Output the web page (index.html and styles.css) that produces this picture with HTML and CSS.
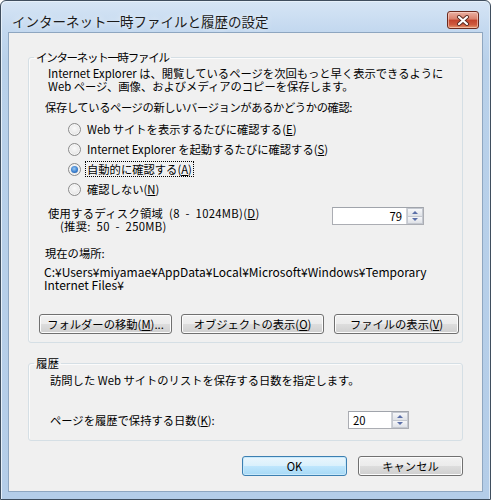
FILE: index.html
```html
<!DOCTYPE html>
<html lang="ja">
<head>
<meta charset="utf-8">
<title>インターネット一時ファイルと履歴の設定</title>
<link rel="stylesheet" href="styles.css">
</head>
<body>
<div class="window">
  <div class="titlebar">
    <span class="title">インターネット一時ファイルと履歴の設定</span>
    <span class="close">
      <svg width="14" height="11" viewBox="0 0 14 11">
        <path d="M3 2 L11 9 M11 2 L3 9" stroke="#5a2a20" stroke-width="4" stroke-linecap="round"/>
        <path d="M3 2 L11 9 M11 2 L3 9" stroke="#ffffff" stroke-width="2.2" stroke-linecap="round"/>
      </svg>
    </span>
  </div>
  <div class="client">
    <fieldset class="group g1">
      <legend>インターネット一時ファイル</legend>
      <p class="para">Internet Explorer は、閲覧しているページを次回もっと早く表示できるように<br>Web ページ、画像、およびメディアのコピーを保存します。</p>
      <p class="q">保存しているページの新しいバージョンがあるかどうかの確認:</p>
      <ul class="radios">
        <li><span class="radio"></span><span class="rl">Web サイトを表示するたびに確認する(<u>E</u>)</span></li>
        <li><span class="radio"></span><span class="rl">Internet Explorer を起動するたびに確認する(<u>S</u>)</span></li>
        <li><span class="radio on"></span><span class="rl focus">自動的に確認する(<u>A</u>)</span></li>
        <li><span class="radio"></span><span class="rl">確認しない(<u>N</u>)</span></li>
      </ul>
      <div class="disk">
        <div class="disk-label">使用するディスク領域 (8 - 1024MB)(<u>D</u>)<br><span class="rec">(推奨: 50 - 250MB)</span></div>
        <div class="spin spin-disk"><span class="val right">79</span><span class="arrows"><i class="up"></i><i class="dn"></i></span></div>
      </div>
      <p class="loc-label">現在の場所:</p>
      <p class="path">C:¥Users¥miyamae¥AppData¥Local¥Microsoft¥Windows¥Temporary<br>Internet Files¥</p>
      <div class="btns">
        <button class="btn b-move">フォルダーの移動(<u>M</u>)...</button>
        <button class="btn b-obj">オブジェクトの表示(<u>O</u>)</button>
        <button class="btn b-file">ファイルの表示(<u>V</u>)</button>
      </div>
    </fieldset>
    <fieldset class="group g2">
      <legend>履歴</legend>
      <p class="hist">訪問した Web サイトのリストを保存する日数を指定します。</p>
      <div class="days">
        <span class="days-label">ページを履歴で保持する日数(<u>K</u>):</span>
        <div class="spin spin-days"><span class="val">20</span><span class="arrows"><i class="up"></i><i class="dn"></i></span></div>
      </div>
    </fieldset>
    <div class="footer">
      <button class="btn dlg default">OK</button>
      <button class="btn dlg">キャンセル</button>
    </div>
  </div>
</div>
</body>
</html>
```

FILE: styles.css
```css
* { box-sizing: border-box; }
html, body { margin: 0; padding: 0; background: #ffffff; }
body {
  font-family: "Noto Sans CJK JP", "Noto Sans", sans-serif;
  font-size: 11.3px;
  color: #000;
}
u { text-decoration: underline; text-underline-offset: 1px; }
p { margin: 0; white-space: nowrap; }

.window {
  width: 491px;
  height: 500px;
  border: 1px solid #3f4e5e;
  border-radius: 6px 6px 0 0;
  background: linear-gradient(180deg, #d6e5f5 0px, #c3d8ef 30px, #b9d1ea 60px, #b4cde8 100%);
  display: flex;
  flex-direction: column;
  box-shadow: inset 1px 1px 0 #e6f0fa, inset -1px 0 0 #dbe8f5;
}

.titlebar {
  height: 31px;
  display: flex;
  align-items: flex-start;
  padding-left: 11px;
}
.title {
  padding-top: 11px;
  font-size: 13.5px;
  line-height: 18px;
  color: #1b1b1b;
  text-shadow: 0 0 6px rgba(255,255,255,0.9);
}
.close {
  margin-left: auto;
  margin-right: 11px;
  margin-top: 10px;
  width: 32px;
  height: 18px;
  border: 1px solid #6b2a1e;
  border-radius: 3px;
  background: linear-gradient(180deg, #eab1a3 0%, #d9806b 45%, #c2422b 50%, #cf5b3f 80%, #e69a6f 100%);
  box-shadow: inset 0 0 0 1px rgba(255,220,210,0.55);
  display: flex;
  align-items: center;
  justify-content: center;
}

.client {
  margin: 0 7px 7px 7px;
  height: 460px;
  border: 1px solid #8ea6c0;
  background: #f0f0f0;
  display: flex;
  flex-direction: column;
}

.group {
  margin: 0 19px;
  padding: 0;
  border: 1px solid #d5dfe5;
  border-radius: 3px;
  min-width: 0;
  box-shadow: inset 1px 1px 0 #fbfbfb;
}
.group legend {
  margin-left: 5px;
  padding: 0 2px;
  line-height: 14px;
  height: 14px;
  font-size: 11.5px;
}
.g1 legend { letter-spacing: -1.3px; }
.g1 { margin-top: 17px; padding-top: 3px; padding-bottom: 8px; }
.g2 { margin-top: 13px; padding-top: 4px; padding-bottom: 11px; }

.para { margin-left: 19px; line-height: 13px; }
.q { margin-left: 16px; margin-top: 8px; line-height: 13px; letter-spacing: -0.4px; }

.radios { list-style: none; margin: 5px 0 0 0; padding: 0 0 0 39px; }
.radios li { height: 20px; display: flex; align-items: center; }
.radio {
  width: 13px; height: 13px;
  border-radius: 50%;
  border: 1px solid #8b8b8b;
  background: radial-gradient(circle at 50% 40%, #fbfbfb 0%, #e8e8e8 60%, #d4d4d4 100%);
  box-shadow: inset 0 0 0 1px #f6f6f6;
  position: relative;
  flex: none;
}
.radio.on::after {
  content: "";
  position: absolute;
  left: 2px; top: 2px;
  width: 7px; height: 7px;
  border-radius: 50%;
  background: radial-gradient(circle at 45% 40%, #9ccaf2 0%, #3a7fcf 55%, #1f4f97 100%);
}
.rl { margin-left: 5px; line-height: 14px; padding: 0 1px; white-space: nowrap; }
.rl.focus { outline: 1px dotted #000; outline-offset: 0; }

.disk {
  display: flex;
  align-items: flex-start;
  margin-top: 8px;
  padding-left: 19px;
  padding-right: 38px;
}
.disk-label { line-height: 13px; white-space: nowrap; letter-spacing: 0.3px; word-spacing: 3px; }
.rec { margin-left: 12px; }
.spin {
  margin-left: auto;
  height: 18px;
  border: 1px solid #abadb3;
  border-top-color: #a0a4ab;
  background: #fff;
  display: flex;
  align-items: stretch;
}
.spin-disk { width: 92px; }
.spin-days { width: 61px; margin-right: 53px; }
.val { flex: 1; line-height: 16px; padding: 0 4px; }
.val.right { text-align: right; padding-right: 4px; }
.arrows {
  width: 17px;
  display: flex;
  flex-direction: column;
  border-left: 1px solid #d0d3d8;
}
.arrows i {
  flex: 1;
  display: flex;
  align-items: center;
  justify-content: center;
  background: linear-gradient(180deg, #f6f7f9, #dfe2e7);
  border: 1px solid #c4c8d0;
}
.arrows i.dn { border-top: 0; }
.arrows i::after {
  content: "";
  width: 0; height: 0;
  border-left: 3px solid transparent;
  border-right: 3px solid transparent;
}
.arrows i.up::after { border-bottom: 3px solid #5b6fa8; }
.arrows i.dn::after { border-top: 3px solid #5b6fa8; }

.loc-label { margin-left: 16px; margin-top: 14px; line-height: 13px; }
.path { margin-left: 15px; margin-top: 5px; line-height: 13px; font-size: 12px; }

.btns {
  display: flex;
  margin-top: 23px;
  padding-left: 10px;
  gap: 9px;
}
.btn {
  font-family: inherit;
  font-size: 11.3px;
  color: #000;
  height: 20px;
  padding: 0;
  border: 1px solid #707070;
  border-radius: 3px;
  background: linear-gradient(180deg, #f2f2f2 0%, #ebebeb 50%, #dddddd 51%, #cfcfcf 100%);
  box-shadow: inset 0 0 0 1px #fcfcfc;
  line-height: 16px;
  white-space: nowrap;
}
.b-move { width: 133px; }
.b-obj { width: 143px; }
.b-file { width: 125px; margin-left: 1px; }

.hist { margin-left: 21px; line-height: 13px; }
.days {
  display: flex;
  align-items: center;
  margin-top: 24px;
  padding-left: 21px;
  height: 18px;
}
.days-label { white-space: nowrap; }

.footer {
  display: flex;
  justify-content: flex-end;
  gap: 11px;
  margin-top: 15px;
  padding-right: 19px;
}
.btn.dlg { width: 105px; height: 20px; }
.btn.default {
  border-color: #3c7fb1;
  background: linear-gradient(180deg, #eaf6fd 0%, #d9f0fc 50%, #bee6fd 51%, #a7d9f5 100%);
  box-shadow: inset 0 0 0 1px #c8e9fb;
}
```
